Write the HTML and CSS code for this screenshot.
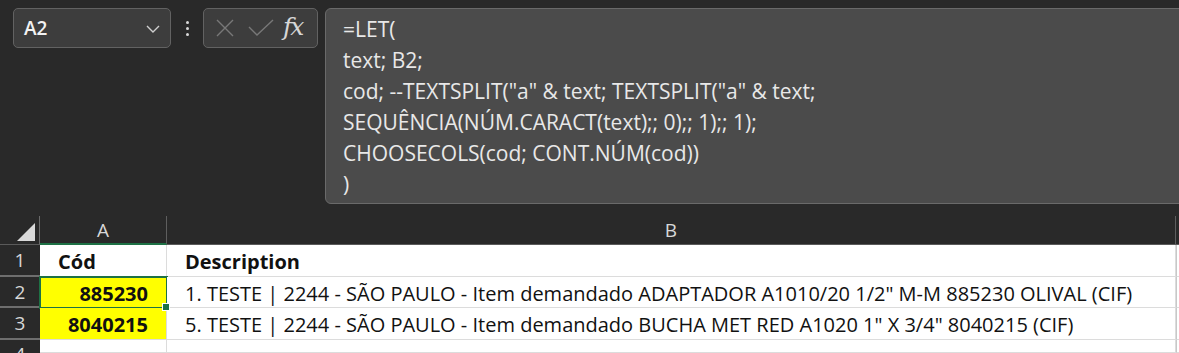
FILE: index.html
```html
<!DOCTYPE html>
<html>
<head>
<meta charset="utf-8">
<link rel="stylesheet" href="styles.css">
</head>
<body>
<div class="app">
  <div class="topbar">
    <div class="namebox">
      <span class="ref">A2</span>
      <svg class="chev" width="14" height="8" viewBox="0 0 14 8"><path d="M1 1 L7 7 L13 1" fill="none" stroke="#cfcfcf" stroke-width="1.4"/></svg>
    </div>
    <div class="dots"><span></span><span></span><span></span></div>
    <div class="fxbox">
      <svg width="20" height="20" viewBox="0 0 20 20"><path d="M2 2 L18 18 M18 2 L2 18" stroke="#787878" stroke-width="1.4" fill="none"/></svg>
      <svg width="26" height="18" viewBox="0 0 26 18"><path d="M1 8 L9 16 L25 1" stroke="#787878" stroke-width="1.4" fill="none"/></svg>
      <span class="fx">fx</span>
    </div>
    <div class="formula">
      <div>=LET(</div>
      <div>text; B2;</div>
      <div>cod; --TEXTSPLIT("a" &amp; text; TEXTSPLIT("a" &amp; text;</div>
      <div>SEQUÊNCIA(NÚM.CARACT(text);; 0);; 1);; 1);</div>
      <div>CHOOSECOLS(cod; CONT.NÚM(cod))</div>
      <div>)</div>
    </div>
  </div>
  <div class="sheet">
    <div class="corner"><span class="tri"></span></div>
    <div class="colhead sel">A</div>
    <div class="colhead">B</div>
    <div class="colhead edge"></div>

    <div class="rowhead">1</div>
    <div class="cell bold left">Cód</div>
    <div class="cell bold left">Description</div>
    <div class="cell edge"></div>

    <div class="rowhead">2</div>
    <div class="cell bold num yellow active">885230<span class="handle"></span></div>
    <div class="cell left">1. TESTE | 2244 - SÃO PAULO - Item demandado ADAPTADOR A1010/20 1/2" M-M 885230 OLIVAL (CIF)</div>
    <div class="cell edge"></div>

    <div class="rowhead">3</div>
    <div class="cell bold num yellow">8040215</div>
    <div class="cell left">5. TESTE | 2244 - SÃO PAULO - Item demandado BUCHA MET RED A1020 1" X 3/4" 8040215 (CIF)</div>
    <div class="cell edge"></div>

    <div class="rowhead last">4</div>
    <div class="cell"></div>
    <div class="cell"></div>
    <div class="cell edge"></div>
  </div>
</div>
</body>
</html>
```
FILE: styles.css
```css
* { box-sizing: border-box; }
html, body { margin: 0; padding: 0; }
body {
  background: #292929;
  font-family: "Open Sans", "Liberation Sans", sans-serif;
  width: 1179px;
  height: 353px;
  overflow: hidden;
}
.app { display: flex; flex-direction: column; }
.topbar {
  display: flex;
  align-items: flex-start;
  padding: 8px 0 0 13px;
  height: 216px;
}
.namebox {
  width: 158px;
  height: 40px;
  background: #3d3d3d;
  border: 1px solid #626262;
  border-radius: 5px;
  display: flex;
  align-items: center;
  justify-content: space-between;
  padding: 0 10px 0 10px;
}
.ref { color: #f2f2f2; font-size: 19px; font-weight: 600; }
.chev { margin-top: 2px; }
.dots {
  width: 32px;
  height: 40px;
  display: flex;
  flex-direction: column;
  align-items: center;
  justify-content: center;
  gap: 3px;
}
.dots span { width: 3px; height: 3px; background: #d8d8d8; border-radius: 50%; }
.fxbox {
  width: 115px;
  height: 40px;
  background: #3d3d3d;
  border: 1px solid #626262;
  border-radius: 5px;
  display: flex;
  align-items: center;
  padding: 0 0 0 11px;
  gap: 13px;
}
.fx {
  font-family: "DejaVu Serif", "Liberation Serif", serif;
  font-style: italic;
  color: #d6d6d6;
  font-size: 25px;
  margin-left: -4px;
  margin-top: -3px;
  letter-spacing: -2px;
}
.formula {
  margin-left: 7px;
  flex: 1;
  height: 196px;
  margin-right: -10px;
  background: #4b4b4b;
  border: 1px solid #6a6a6a;
  border-radius: 6px;
  padding: 5px 0 0 17px;
  color: #e8e8e8;
  font-size: 21px;
  line-height: 31px;
  white-space: nowrap;
}
.sheet {
  display: grid;
  grid-template-columns: 40px 127px 1009px 3px;
  grid-template-rows: 29px 32px 31px 32px 13px;
}
.corner {
  position: relative;
  border-right: 1px solid #6a6a6a;
  border-bottom: 1px solid #5a5a5a;
}
.tri {
  position: absolute;
  right: 4px;
  bottom: 3px;
  width: 0; height: 0;
  border-left: 18px solid transparent;
  border-bottom: 18px solid #d9d9d9;
}
.colhead {
  color: #d8d8d8;
  font-size: 19px;
  display: flex;
  align-items: center;
  justify-content: center;
  border-right: 1px solid #5e5e5e;
  border-bottom: 1px solid #5a5a5a;
}
.colhead.sel { border-bottom: 2px solid #1e7145; }
.colhead.edge { border-right: none; }
.rowhead {
  color: #d8d8d8;
  font-size: 19px;
  display: flex;
  align-items: center;
  justify-content: center;
  border-bottom: 2px solid #6e6e6e;
  background: #292929;
}
.rowhead.last { align-items: flex-start; padding-top: 3px; border-bottom: none; overflow: hidden; line-height: 22px; }
.cell {
  background: #ffffff;
  border-right: 1px solid #dcdcdc;
  border-bottom: 1px solid #dcdcdc;
  font-size: 20px;
  color: #111;
  display: flex;
  align-items: center;
  white-space: nowrap;
  position: relative;
  padding-top: 2px;
}
.cell.edge { border-right: none; border-left: 1px solid #c8c8c8; }
.cell.left { padding-left: 18px; }
.cell.num { justify-content: flex-end; padding-right: 18px; }
.bold { font-weight: 700; }
.yellow { background: #ffff00; }
.active { outline: 2px solid #1e7145; outline-offset: -1px; }
.handle {
  position: absolute;
  right: -4px;
  bottom: -4px;
  width: 8px;
  height: 8px;
  background: #1e7145;
  border: 1px solid #ffffff;
  z-index: 2;
}
```
